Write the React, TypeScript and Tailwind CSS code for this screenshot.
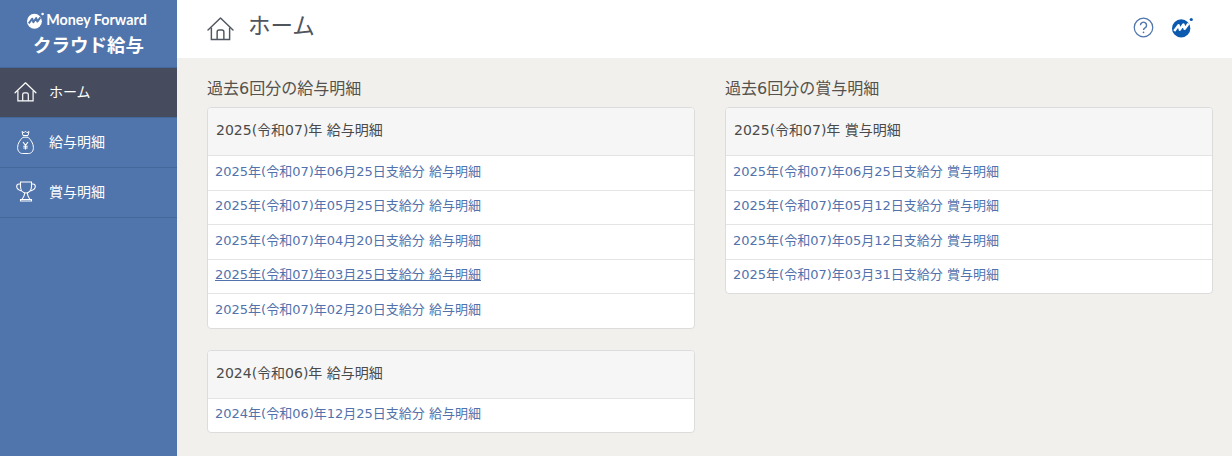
import React from 'react';

const FONT = "font-['DejaVu_Sans','Noto_Sans_CJK_JP',sans-serif]";

const salary2025 = [
  { label: '2025年(令和07)年06月25日支給分 給与明細' },
  { label: '2025年(令和07)年05月25日支給分 給与明細' },
  { label: '2025年(令和07)年04月20日支給分 給与明細' },
  { label: '2025年(令和07)年03月25日支給分 給与明細', hover: true },
  { label: '2025年(令和07)年02月20日支給分 給与明細' },
];
const salary2024 = [{ label: '2024年(令和06)年12月25日支給分 給与明細' }];
const bonus2025 = [
  { label: '2025年(令和07)年06月25日支給分 賞与明細' },
  { label: '2025年(令和07)年05月12日支給分 賞与明細' },
  { label: '2025年(令和07)年05月12日支給分 賞与明細' },
  { label: '2025年(令和07)年03月31日支給分 賞与明細' },
];

const HomeIcon = ({ className }: { className: string }) => (
  <svg viewBox="0 0 28 25" fill="none" stroke="currentColor" strokeWidth="1.5" className={className}>
    <path d="M1 13.5 14 1l13 12.5" strokeLinejoin="round" strokeLinecap="round" />
    <path d="M4.5 11v12.5h19V11" />
    <path d="M10.5 23.5v-8a2 2 0 0 1 2-2h3a2 2 0 0 1 2 2v8" />
  </svg>
);

const BagIcon = () => (
  <svg viewBox="0 0 17 24" fill="none" stroke="currentColor" strokeWidth="1" className="h-[24px] w-[17px] text-white">
    <path d="M5 1.500 7 2.700 8.500 1.200 10 2.700l2-1.200-1 4H6z" strokeLinejoin="round" />
    <path d="M6 5.500h5M6 7.200h5" />
    <path d="M6 7.200C3 10 .6 13.500.6 17.500c0 3.500 2 6 5 6h6c3 0 4.800-2.500 4.800-6 0-4-2.400-7.500-5.400-10.300" />
    <path d="m6 12 2.500 3.300L11 12M8.500 15.300v4.200M6.300 16.300h4.400M6.300 18h4.400" strokeWidth="1.100" />
  </svg>
);

const TrophyIcon = () => (
  <svg viewBox="0 0 20 21" fill="none" stroke="currentColor" strokeWidth="1.100" className="h-[21px] w-[20px] text-white">
    <path d="M4.500 1h11v4.500c0 3.800-2.300 6.500-5.500 6.500S4.500 9.300 4.500 5.500z" />
    <path d="M4.500 3H3C1 3 .7 4.500.7 5.500c0 2.300 2.300 3.700 4.800 4.500M15.500 3H17c2 0 2.300 1.500 2.300 2.500 0 2.300-2.300 3.700-4.800 4.500" />
    <path d="M8.700 12c0 2.500-1 4-2.700 6.500M11.300 12c0 2.500 1 4 2.700 6.500" />
    <path d="M4.500 18.500h11V20h-11z" />
  </svg>
);

const MfLogo = ({ className, bg }: { className: string; bg: string }) => (
  <svg viewBox="0 0 24 24" className={className}>
    <circle cx="10.500" cy="13" r="10.500" fill="currentColor" />
    <circle cx="22" cy="2.800" r="1.800" fill="currentColor" />
    <path d="M2.500 16 7.500 9.500l1.500 5 4-6 1.500 5 4.500-6" fill="none" stroke={bg} strokeWidth="2.800" strokeLinejoin="round" />
  </svg>
);

const SideItem = ({ icon, label, active }: { icon: React.ReactNode; label: string; active?: boolean }) => (
  <div className={`flex h-[50px] items-center border-b border-[#44689c] pb-[1px] ${active ? 'bg-[#464c5e]' : ''}`}>
    <div className="flex w-[49px] shrink-0 justify-center pb-[1px] pl-[2px]">{icon}</div>
    <span className="text-[14px] text-white">{label}</span>
  </div>
);

const Panel = ({ title, rows }: { title: string; rows: { label: string; hover?: boolean }[] }) => (
  <div className="overflow-hidden rounded-[4px] border border-[#dcdcdc] bg-white">
    <div className="flex h-[47px] items-center bg-[#f6f6f6] pb-[2px] pl-[8px] text-[14px] text-[#4a4a4a]">{title}</div>
    {rows.map((row, i) => (
      <div key={i} className="flex h-[34.5px] items-center border-t border-[#e4e4e4] pb-[2.5px] pl-[7px] text-[13px] text-[#5172ac]">
        <span className={row.hover ? 'underline' : ''}>{row.label}</span>
      </div>
    ))}
  </div>
);

export default function App() {
  return (
    <div className={`flex h-[456px] w-[1232px] overflow-hidden bg-[#f1f0ec] ${FONT}`}>
      <aside className="h-full w-[177px] shrink-0 bg-[#5074ac]">
        <div className="flex h-[68px] flex-col items-center border-b border-[#44689c] pt-[10px] text-white">
          <div className="flex h-[20px] items-center gap-[2px] pr-[3px]">
            <MfLogo className="h-[17px] w-[17px] text-white" bg="#5074ac" />
            <span className="font-['Lato',sans-serif] text-[14.3px] font-bold leading-none">Money Forward</span>
          </div>
          <div className="mt-[2px] text-[18.5px] font-bold leading-[28px]">クラウド給与</div>
        </div>
        <SideItem active icon={<HomeIcon className="h-[20px] w-[23px] text-white" />} label="ホーム" />
        <SideItem icon={<BagIcon />} label="給与明細" />
        <SideItem icon={<TrophyIcon />} label="賞与明細" />
      </aside>
      <div className="min-w-0 flex-1">
        <header className="flex h-[58px] items-center justify-between bg-white pl-[30px] pr-[39px]">
          <div className="flex items-center gap-[14px]">
            <HomeIcon className="mb-[1px] h-[24px] w-[27px] text-[#50565f]" />
            <h1 className="mb-[4px] text-[22.5px] font-normal text-[#50545c]">ホーム</h1>
          </div>
          <div className="mb-[3px] flex items-center gap-[18px]">
            <svg viewBox="0 0 22 22" className="h-[21px] w-[21px] text-[#5074ac]" fill="none" stroke="currentColor">
              <circle cx="11" cy="11" r="9.700" strokeWidth="1.300" />
              <path d="M7.800 8.600a3.200 3.200 0 1 1 4.800 2.800c-1 .6-1.600 1.200-1.600 2.300" strokeWidth="1.500" />
              <circle cx="11" cy="16" r=".9" fill="currentColor" stroke="none" />
            </svg>
            <MfLogo className="h-[21px] w-[21px] text-[#0b5ab0]" bg="#ffffff" />
          </div>
        </header>
        <main className="grid grid-cols-2 gap-x-[30px] pl-[30px] pr-[19px]">
          <section>
            <h2 className="flex h-[49px] items-end pb-[6px] text-[16px] font-normal text-[#55524d]">過去6回分の給与明細</h2>
            <div className="flex flex-col gap-[21px]">
              <Panel title="2025(令和07)年 給与明細" rows={salary2025} />
              <Panel title="2024(令和06)年 給与明細" rows={salary2024} />
            </div>
          </section>
          <section>
            <h2 className="flex h-[49px] items-end pb-[6px] text-[16px] font-normal text-[#55524d]">過去6回分の賞与明細</h2>
            <Panel title="2025(令和07)年 賞与明細" rows={bonus2025} />
          </section>
        </main>
      </div>
    </div>
  );
}
